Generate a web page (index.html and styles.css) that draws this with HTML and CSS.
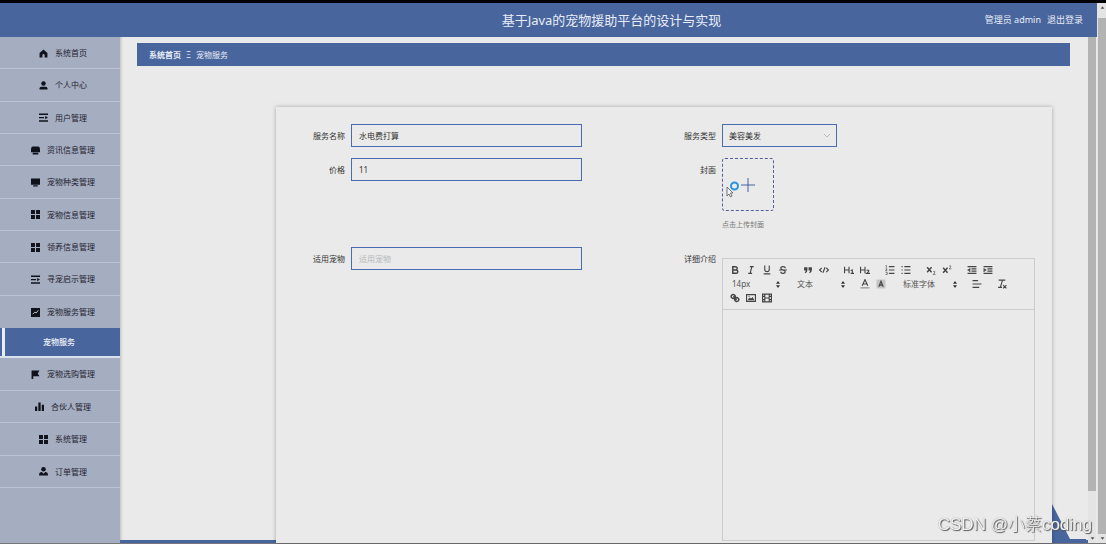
FILE: index.html
```html
<!DOCTYPE html>
<html lang="zh-CN">
<head>
<meta charset="utf-8">
<title>基于Java的宠物援助平台的设计与实现</title>
<link rel="stylesheet" href="styles.css">
</head>
<body>
<div class="window">
  <div class="app">
    <header class="header">
      <h1 class="header-title">基于Java的宠物援助平台的设计与实现</h1>
      <div class="header-user"><span>管理员 admin</span><a href="#">退出登录</a></div>
    </header>
    <div class="body">
      <nav class="sidebar">
        <ul class="menu menu-top">
          <li><a href="#"><svg class="icon" viewBox="0 0 16 16"><path d="M8 1 1 7v8h5v-5q2-2 4 0v5h5V7z"/></svg>系统首页</a></li>
          <li><a href="#"><svg class="icon" viewBox="0 0 16 16"><circle cx="8" cy="4.5" r="4"/><path d="M1 15v-2q0-3 3-3h8q3 0 3 3v2z"/></svg>个人中心</a></li>
          <li><a href="#"><svg class="icon" viewBox="0 0 16 16"><path d="M0 1h16v2.500H0zM0 7h9v2.500H0zM0 13h16v2.500H0zM11 5.500l5 2.700-5 2.700z"/></svg>用户管理</a></li>
          <li><a href="#"><svg class="icon" viewBox="0 0 16 16"><path d="M3 1h10q3 0 3 5v5H0V6q0-5 3-5zM3 12h10v3H3z"/></svg>资讯信息管理</a></li>
          <li><a href="#"><svg class="icon" viewBox="0 0 16 16"><path d="M0 1h16v11H0zM4 13h8v2H4z"/></svg>宠物种类管理</a></li>
          <li><a href="#"><svg class="icon" viewBox="0 0 16 16"><path d="M0 0h7v7H0zM9 0h7v7H9zM0 9h7v7H0zM9 9h7v7H9z"/></svg>宠物信息管理</a></li>
          <li><a href="#"><svg class="icon" viewBox="0 0 16 16"><path d="M0 0h7v7H0zM9 0h7v7H9zM0 9h7v7H0zM9 9h7v7H9z"/></svg>领养信息管理</a></li>
          <li><a href="#"><svg class="icon" viewBox="0 0 16 16"><path d="M0 1h16v2.500H0zM0 7h9v2.500H0zM0 13h16v2.500H0zM11 5.500l5 2.700-5 2.700z"/></svg>寻宠启示管理</a></li>
          <li><a href="#"><svg class="icon" viewBox="0 0 16 16"><path d="M0 0h16v16H0z"/><path d="m3 11 4-4 2 2 4-5" fill="none" stroke="#c5cad6" stroke-width="1.6"/></svg>宠物服务管理</a></li>
        </ul>
        <a class="submenu-active" href="#" aria-current="page">宠物服务</a>
        <ul class="menu menu-bottom">
          <li><a href="#"><svg class="icon" viewBox="0 0 16 16"><path d="M1 1h14l-3 5 3 5H4v5H1z"/></svg>宠物选购管理</a></li>
          <li><a href="#"><svg class="icon" viewBox="0 0 16 16"><path d="M0 8h4v8H0zM6 1h4v15H6zM12 5h4v11h-4z"/></svg>合伙人管理</a></li>
          <li><a href="#"><svg class="icon" viewBox="0 0 16 16"><path d="M0 0h7v7H0zM9 0h7v7H9zM0 9h7v7H0zM9 9h7v7H9z"/></svg>系统管理</a></li>
          <li><a href="#"><svg class="icon" viewBox="0 0 16 16"><circle cx="8" cy="4" r="4"/><path d="M0 15q0-6 5-6l3 3 3-3q5 0 5 6z"/></svg>订单管理</a></li>
        </ul>
      </nav>
      <main class="main">
        <svg class="backdrop" viewBox="0 0 34 39"><path d="M0 0 18 35H34V39H0z"/></svg>
        <nav class="breadcrumb"><b>系统首页</b><span>Ξ</span><span>宠物服务</span></nav>
        <form class="card">
          <div class="field">
            <label for="name">服务名称</label>
            <input class="control" id="name" type="text" value="水电费打算">
          </div>
          <div class="field">
            <label for="kind">服务类型</label>
            <div class="select-box">
              <select class="control" id="kind"><option>美容美发</option></select>
              <svg class="chevron" viewBox="0 0 8 8"><path d="m1 2 3 3 3-3"/></svg>
            </div>
          </div>
          <div class="field">
            <label for="price">价格</label>
            <input class="control" id="price" type="text" value="11">
          </div>
          <div class="field">
            <label for="cover">封面</label>
            <div class="upload">
              <button class="upload-box" id="cover" type="button" aria-label="上传封面">
                <svg class="plus" viewBox="0 0 16 16"><path d="M8 1v14M1 8h14"/></svg>
                <svg class="pointer" viewBox="0 0 14 17"><circle cx="8.500" cy="5" r="3.500" fill="none" stroke="#2b93df" stroke-width="2"/><path d="M1 6v9l2-2 1.500 3 1.500-1-1.500-3H7z" fill="#f3f3f3" stroke="#555" stroke-width=".8"/></svg>
              </button>
              <p class="upload-tip">点击上传封面</p>
            </div>
          </div>
          <div class="field">
            <label for="pet">适用宠物</label>
            <input class="control" id="pet" type="text" placeholder="适用宠物">
          </div>
          <div class="field field-editor">
            <label for="detail">详细介绍</label>
            <div class="editor">
              <div class="toolbar">
                <div class="group">
                  <button type="button" aria-label="粗体"><svg viewBox="0 0 18 18"><path class="bold" d="M5 3h5a3 3 0 0 1 0 6H5zM5 9h6a3 3 0 0 1 0 6H5z"/></svg></button>
                  <button type="button" aria-label="斜体"><svg viewBox="0 0 18 18"><path d="M7 3h7M4 15h7M10.500 3l-3 12"/></svg></button>
                  <button type="button" aria-label="下划线"><svg viewBox="0 0 18 18"><path d="M5 1v7a4 4 0 0 0 8 0V1M3 16h12"/></svg></button>
                  <button type="button" aria-label="删除线"><svg viewBox="0 0 18 18"><path d="M13 6c0-4-8-4-8 0 0 3 8 3 8 6 0 4-8 4-8 0M2 9h14"/></svg></button>
                </div>
                <div class="group">
                  <button type="button" aria-label="引用"><svg viewBox="0 0 18 18"><path class="solid" d="M2 4h6v5q0 4-4 6l-1-1q2-2 2-4H2zM10 4h6v5q0 4-4 6l-1-1q2-2 2-4h-3z"/></svg></button>
                  <button type="button" aria-label="代码"><svg viewBox="0 0 18 18"><path d="M5 5 1 9l4 4M13 5l4 4-4 4M11 4 7 14"/></svg></button>
                </div>
                <div class="group">
                  <button type="button" aria-label="标题一"><svg viewBox="0 0 18 18"><path d="M1 3v12M9 3v12M1 9h8M12 10l3-1v6M12 15h6"/></svg></button>
                  <button type="button" aria-label="标题二"><svg viewBox="0 0 18 18"><path d="M1 3v12M9 3v12M1 9h8M12 10q2-2 4 0 0 2-4 5h6"/></svg></button>
                </div>
                <div class="group">
                  <button type="button" aria-label="有序列表"><svg viewBox="0 0 18 18"><path d="M7 3h10M7 9h10M7 15h10"/><path class="thin" d="M1 1h1.500v4M1 7h3l-3 3h3M1 13h3v4H1"/></svg></button>
                  <button type="button" aria-label="无序列表"><svg viewBox="0 0 18 18"><path d="M6 3h11M6 9h11M6 15h11M1 3h2M1 9h2M1 15h2"/></svg></button>
                </div>
                <div class="group">
                  <button type="button" aria-label="下标"><svg viewBox="0 0 18 18"><path class="bold" d="m2 4 8 9M10 4l-8 9"/><path class="thin" d="M13 12q2-2 3 0 0 2-3 5h4"/></svg></button>
                  <button type="button" aria-label="上标"><svg viewBox="0 0 18 18"><path class="bold" d="m2 5 8 9M10 5l-8 9"/><path class="thin" d="M13 2q2-2 3 0 0 2-3 5h4"/></svg></button>
                </div>
                <div class="group">
                  <button type="button" aria-label="减少缩进"><svg viewBox="0 0 18 18"><path d="M1 3h16M8 7h9M8 11h9M1 15h16M5 7 2 9l3 2z"/></svg></button>
                  <button type="button" aria-label="增加缩进"><svg viewBox="0 0 18 18"><path d="M1 3h16M8 7h9M8 11h9M1 15h16M2 7l3 2-3 2z"/></svg></button>
                </div>
                <div class="picker">
                  <select aria-label="字号"><option>14px</option></select>
                  <svg viewBox="0 0 8 14"><path d="m4 0 4 5.500H0zM4 14 0 8.500h8z"/></svg>
                </div>
                <div class="picker">
                  <select aria-label="段落"><option>文本</option></select>
                  <svg viewBox="0 0 8 14"><path d="m4 0 4 5.500H0zM4 14 0 8.500h8z"/></svg>
                </div>
                <div class="group">
                  <button type="button" aria-label="文字颜色"><svg viewBox="0 0 18 18"><path d="m4 12 5-11 5 11M6 9h6"/><path class="thin" d="M1 16h16"/></svg></button>
                  <button type="button" aria-label="背景颜色"><svg viewBox="0 0 18 18"><path class="shade" d="M1 1h16v16H1z"/><path d="m5 14 4-10 4 10M7 11h4"/></svg></button>
                </div>
                <div class="picker picker-wide">
                  <select aria-label="字体"><option>标准字体</option></select>
                  <svg viewBox="0 0 8 14"><path d="m4 0 4 5.500H0zM4 14 0 8.500h8z"/></svg>
                </div>
                <div class="group">
                  <button type="button" aria-label="对齐"><svg viewBox="0 0 18 18"><path d="M1 3h10M1 9h16M1 15h12"/></svg></button>
                </div>
                <div class="group">
                  <button type="button" aria-label="清除格式"><svg viewBox="0 0 18 18"><path d="M3 2h12M10 2 6 15M2 15h7M11 11l6 6M17 11l-6 6"/></svg></button>
                </div>
                <div class="group">
                  <button type="button" aria-label="链接"><svg viewBox="0 0 18 18"><path class="bold" d="m6 6 6 6M8 9c-3 3-8-2-5-5s8 0 6 4M10 9c3-3 8 2 5 5s-8 0-6-4"/></svg></button>
                  <button type="button" aria-label="图片"><svg viewBox="0 0 18 18"><path d="M1 3h16v12H1z"/><path class="solid" d="m3 13 3-5 3 2 3-3 3 6z"/><circle class="solid" cx="5.500" cy="6" r="1"/></svg></button>
                  <button type="button" aria-label="视频"><svg viewBox="0 0 18 18"><path d="M1 2h16v14H1zM5 2v14M13 2v14M5 9h8M1 6h4M1 12h4M13 6h4M13 12h4"/></svg></button>
                </div>
              </div>
              <textarea class="editor-text" id="detail"></textarea>
            </div>
          </div>
        </form>
      </main>
      <div class="scroll scroll-inner"><div class="thumb"></div><svg viewBox="0 0 8 8"><path d="M1 2h6L4 6z"/></svg></div>
    </div>
  </div>
  <div class="scroll scroll-page"><svg viewBox="0 0 8 8"><path d="M1 6h6L4 2z"/></svg><div class="thumb"></div><svg viewBox="0 0 8 8"><path d="M1 2h6L4 6z"/></svg></div>
</div>
<div class="watermark">CSDN @小蔡coding</div>
</body>
</html>
```

FILE: styles.css
```css
* {
  box-sizing: border-box;
}

body {
  margin: 0;
  color: #333;
  background: #eaeaea;
  font: 8px/12px "Noto Sans", "Noto Sans CJK SC", sans-serif;
}

a {
  color: inherit;
  text-decoration: none;
}

input,
select,
button,
textarea {
  margin: 0;
  padding: 0;
  border: 0;
  border-radius: 0;
  background: none;
  color: inherit;
  font: inherit;
  appearance: none;
}

.window {
  display: flex;
  min-height: 100vh;
  border-top: 3px solid #000;
  border-bottom: 1px solid #77777b;
}

.app {
  flex: 1;
  min-width: 0;
  display: flex;
  flex-direction: column;
}

.header {
  display: grid;
  grid-template-columns: 1fr auto 1fr;
  align-items: center;
  height: 34px;
  padding: 0 14px 0 140px;
  background: #48659d;
  color: #e8edf7;
}

.header-title {
  grid-column: 2;
  margin: 0;
  font-size: 13px;
  line-height: 20px;
  font-weight: 400;
}

.header-user {
  display: flex;
  justify-content: flex-end;
  gap: 6px;
  font-size: 9px;
}

.body {
  flex: 1;
  display: flex;
}

.sidebar {
  width: 120px;
  background: #a5adc1;
  color: #1f2230;
}

.menu {
  display: grid;
  grid-auto-rows: 1fr;
  margin: 0;
  padding: 0;
  list-style: none;
}

.menu-top {
  min-height: 291px;
}

.menu-bottom {
  min-height: 130px;
}

.menu li {
  display: grid;
  border-bottom: 1px solid #b9c4d6;
}

.menu-top li:last-child {
  border-bottom: 0;
}

.menu a {
  display: flex;
  align-items: center;
  justify-content: center;
  gap: 7px;
  padding: 1px 0 0 6px;
}

.icon {
  width: 9px;
  height: 9px;
  fill: #10121c;
}

.submenu-active {
  display: flex;
  align-items: center;
  justify-content: center;
  height: 30px;
  padding-right: 2px;
  border-bottom: 2px solid #dbe2ef;
  background: linear-gradient(90deg, #48659d 2px, #e8edf5 2px 5px, #48659d 5px);
  color: #f0f3fa;
  font-weight: 500;
}

.main {
  position: relative;
  flex: 1;
  min-width: 0;
  display: flex;
  flex-direction: column;
  padding: 6px 18px 0 17px;
  border-bottom: 3px solid #48659d;
  box-shadow: inset 3px 0 3px -2px #bbb;
}

.backdrop {
  position: absolute;
  right: 2px;
  bottom: -3px;
  width: 34px;
  height: 39px;
  fill: #48659d;
}

.breadcrumb {
  display: flex;
  align-items: center;
  gap: 5px;
  height: 23px;
  padding: 0 12px;
  background: #48659d;
  color: #e8edf7;
}

.card {
  position: relative;
  flex: 1;
  display: grid;
  grid-template-columns: 1fr 1fr;
  grid-template-rows: auto minmax(78px, auto) 1fr;
  row-gap: 11px;
  margin: 41px 18px -3px 139px;
  padding: 17px 17px 2px;
  background: #eaeaea;
  box-shadow: 0 0 4px rgba(0, 0, 0, 0.3);
}

.field {
  display: grid;
  grid-template-columns: 52px 1fr;
  column-gap: 6px;
  align-items: start;
}

.field > label {
  line-height: 23px;
  text-align: right;
}

.control {
  display: block;
  width: 100%;
  max-width: 231px;
  height: 23px;
  padding: 0 7px;
  border: 1px solid #4b6bb0;
}

.control::placeholder {
  color: #b5b9bd;
}

.select-box {
  position: relative;
  width: 115px;
}

.select-box .control {
  padding: 0 6px;
}

.chevron {
  position: absolute;
  top: 8px;
  right: 6px;
  width: 8px;
  height: 8px;
  fill: none;
  stroke: #b5b9bd;
  pointer-events: none;
}

.upload-box {
  position: relative;
  display: grid;
  place-items: center;
  width: 52px;
  height: 53px;
  border: 1px dashed #4f5f9f;
  border-radius: 3px;
}

.plus {
  width: 16px;
  height: 16px;
  stroke: #46609f;
}

.pointer {
  position: absolute;
  left: 3px;
  top: 22px;
  width: 14px;
  height: 17px;
}

.upload-tip {
  margin: 8px 0 0;
  color: #777;
  font-size: 7px;
}

.field-editor {
  align-items: stretch;
}

.editor {
  display: flex;
  flex-direction: column;
  margin-top: 11px;
  border: 1px solid #ccc;
}

.toolbar {
  display: flex;
  flex-wrap: wrap;
  column-gap: 9px;
  padding: 4px;
  border-bottom: 1px solid #ccc;
}

.group {
  display: flex;
}

.group button {
  display: grid;
  place-items: center;
  width: 16px;
  height: 14px;
}

.group svg {
  width: 10px;
  height: 10px;
  fill: none;
  stroke: #444;
  stroke-width: 2;
}

.group .bold {
  stroke-width: 2.6;
}

.group .thin {
  stroke-width: 1.2;
}

.group .solid {
  fill: #444;
  stroke: none;
}

.group .shade {
  fill: #c4c4c4;
  stroke: none;
}

.picker {
  position: relative;
  width: 56px;
  height: 14px;
  color: #555;
}

.picker-wide {
  width: 62px;
}

.picker select {
  width: 100%;
  height: 14px;
  padding-left: 5px;
}

.picker svg {
  position: absolute;
  top: 4px;
  right: 3px;
  width: 4px;
  height: 7px;
  fill: #333;
  pointer-events: none;
}

.editor-text {
  flex: 1;
  width: 100%;
  min-height: 120px;
  padding: 6px 8px;
  resize: none;
}

.scroll {
  display: flex;
  flex-direction: column;
  align-items: center;
  background: #e4e4e4;
}

.scroll svg {
  width: 5px;
  height: 5px;
  margin: 2px 0;
  fill: #555;
}

.scroll .thumb {
  flex: 1;
  width: 100%;
  background: #b3b3b3;
}

.scroll-inner {
  width: 8px;
  margin-right: 1px;
}

.scroll-inner .thumb {
  margin-bottom: 43px;
}

.scroll-page {
  width: 9px;
  padding-left: 1px;
}

.scroll-page .thumb {
  margin: 6px 0 0;
}

.watermark {
  position: fixed;
  right: 14px;
  bottom: 7px;
  color: #f2f2f2;
  font: 300 17px/24px "Liberation Sans", "Noto Sans CJK SC", sans-serif;
  text-shadow: 1px 1px 1px #555, 0 0 1px #888;
}
```
